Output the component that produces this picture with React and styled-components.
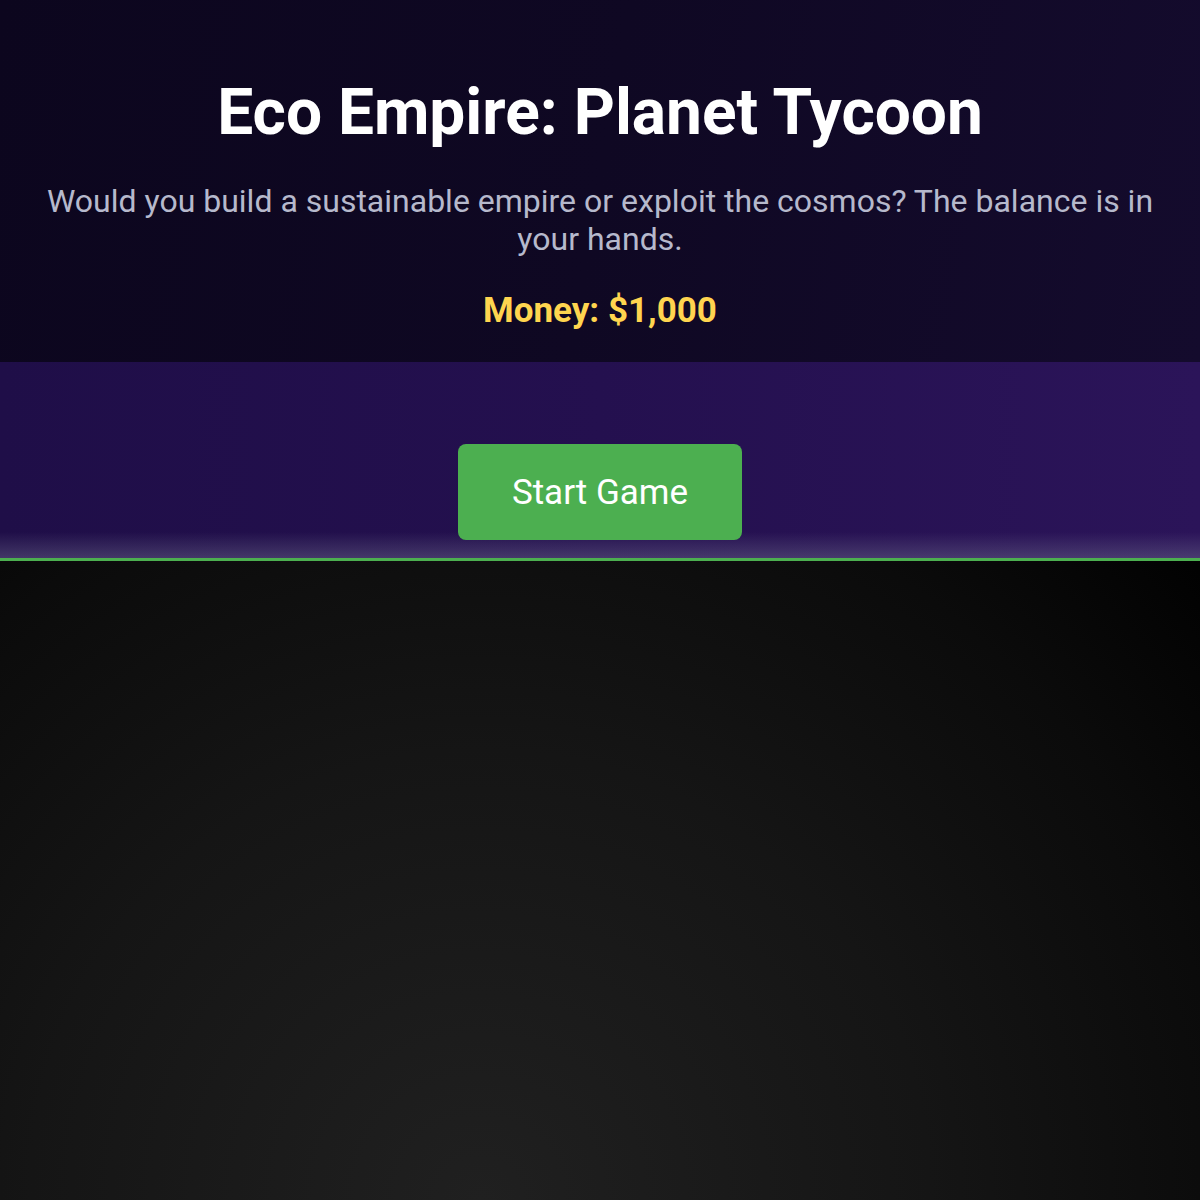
import styled, { createGlobalStyle } from 'styled-components'

const GlobalStyle = createGlobalStyle`
    * { box-sizing: border-box; }
    html, body {
        margin: 0;
        padding: 0;
        background: #000;
        font-family: Roboto, "Liberation Sans", sans-serif;
    }
`

export default function App() {
    return (
        <>
            <GlobalStyle />
            <Page>
                <Header>
                    <Title>Eco Empire: Planet Tycoon</Title>
                    <Tagline>
                        Would you build a sustainable empire or exploit the cosmos? The balance is in your hands.
                    </Tagline>
                    <Money>Money: $1,000</Money>
                </Header>
                <StartPanel>
                    <StartButton>Start Game</StartButton>
                </StartPanel>
                <GameArea />
            </Page>
        </>
    )
}

const Page = styled.div`
    min-height: 1200px;
    display: flex;
    flex-direction: column;
`

const Header = styled.header`
    background: linear-gradient(100deg, #0c061e 0%, #0f0823 50%, #140b2d 100%);
    text-align: center;
    padding: 78px 40px 31px;
`

const Title = styled.h1`
    margin: 0;
    font-size: 64px;
    font-weight: 700;
    line-height: 1.1;
    color: #fff;
`

const Tagline = styled.p`
    margin: 34px 0 0;
    font-size: 32px;
    line-height: 38px;
    color: #b6b9cc;
`

const Money = styled.div`
    margin-top: 33px;
    font-size: 35px;
    font-weight: 700;
    line-height: 40px;
    color: #ffd54f;
`

const StartPanel = styled.section`
    position: relative;
    height: 199px;
    display: flex;
    justify-content: center;
    padding-top: 82px;
    background: linear-gradient(90deg, #1f0e48 0%, #24104f 50%, #2b1459 100%);
    border-bottom: 3px solid #4caf50;

    &::after {
        content: '';
        position: absolute;
        left: 0;
        right: 0;
        bottom: 0;
        height: 26px;
        background: linear-gradient(180deg, rgba(90, 80, 130, 0) 0%, rgba(110, 105, 140, 0.45) 100%);
        pointer-events: none;
    }
`

const StartButton = styled.button`
    position: relative;
    z-index: 1;
    width: 284px;
    height: 96px;
    border: none;
    border-radius: 8px;
    background: #4caf50;
    color: #fff;
    font-family: Roboto, "Liberation Sans", sans-serif;
    font-size: 35px;
    font-weight: 400;
    cursor: pointer;
`

const GameArea = styled.main`
    flex: 1;
    background: radial-gradient(circle 1000px at 40% 100%, #202020 0%, #151515 45%, #0b0b0b 75%, #000 100%);
`
